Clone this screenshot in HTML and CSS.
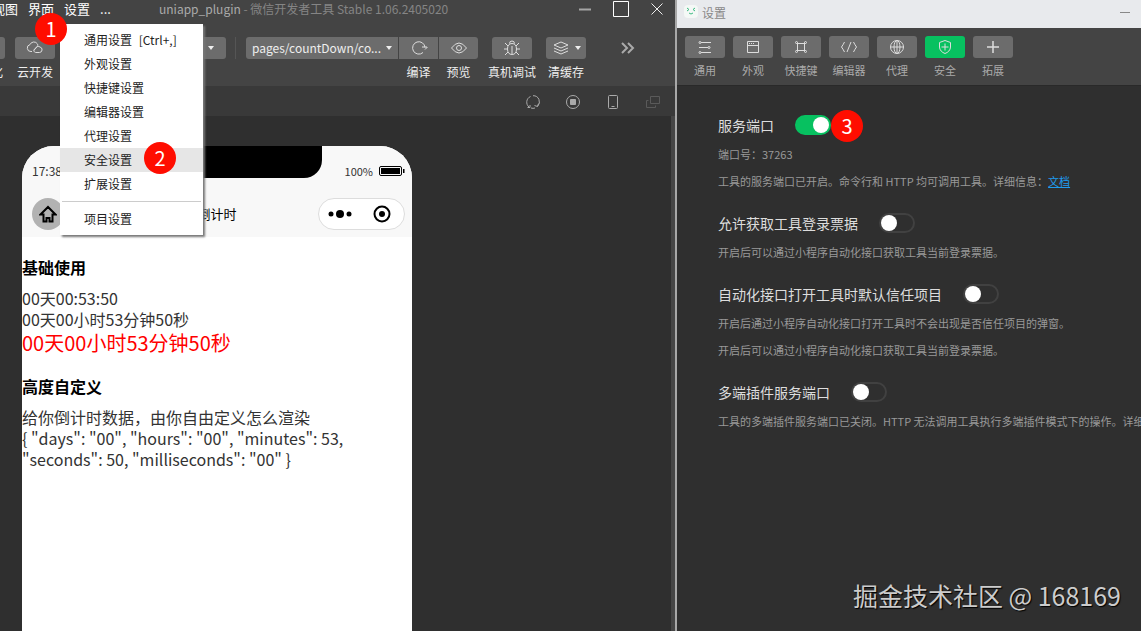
FILE: index.html
```html
<!DOCTYPE html>
<html lang="zh-CN">

<head>
    <meta charset="UTF-8">
    <meta name="viewport" content="width=device-width, initial-scale=1.0">
    <title>设置</title>
    <link rel="stylesheet" href="styles.css">
</head>

<body>
    <main class="desktop">
        <!-- devtools window -->
        <section class="devtools">
            <header class="titlebar">
                <nav class="menubar">
                    <button type="button">视图</button>
                    <button type="button">界面</button>
                    <button type="button">设置</button>
                    <button type="button">...</button>
                </nav>
                <div class="window-title"><span>uniapp_plugin</span> - 微信开发者工具 Stable 1.06.2405020</div>
                <div class="window-buttons">
                    <button type="button" aria-label="最小化"><svg width="18" height="18" viewBox="0 0 18 18"><path d="M3 9.500h12" stroke="#a5a5a5" stroke-width="2"/></svg></button>
                    <button type="button" aria-label="最大化"><svg width="18" height="18" viewBox="0 0 18 18"><path d="M1.500 1.500h15v15h-15z" stroke="#fff"/></svg></button>
                    <button type="button" aria-label="关闭"><svg width="18" height="18" viewBox="0 0 18 18"><path d="M3.500 3.500l11 11M14.500 3.500l-11 11" stroke="#eee"/></svg></button>
                </div>
            </header>

            <div class="toolbar">
                <div class="tool first">
                    <button type="button" aria-label="可视化"></button>
                    <span>可视化</span>
                </div>
                <div class="tool">
                    <button type="button" aria-label="云开发"><svg width="18" height="16" viewBox="0 0 18 16"><path d="M6 11.500H5A3.500 3.500 0 0 1 4 4.600 4.200 4.200 0 0 1 11.500 4c1 2-1 4-3 5.200-1.500 1.300-.2 3.300 1.500 3.300h3.500a2.800 2.800 0 0 0 .5-5.500 3 3 0 0 0-4.500 1.200L8 10.500"/></svg></button>
                    <span>云开发</span>
                </div>
                <button type="button" class="more" aria-label="更多"><i class="caret"></i></button>
                <i class="divider"></i>
                <div class="group">
                    <button type="button" class="page-select">pages/countDown/co...<i class="caret"></i></button>
                    <div class="tool">
                        <button type="button" aria-label="编译"><svg width="18" height="16" viewBox="0 0 18 16"><path d="M13 12.500A6.200 6.200 0 1 1 15 7.500M12 7h5M15 9.500l2.500-2.500"/></svg></button>
                        <span>编译</span>
                    </div>
                    <div class="tool">
                        <button type="button" aria-label="预览"><svg width="18" height="16" viewBox="0 0 18 16"><path d="M1.500 8Q9-2 16.500 8 9 18 1.500 8z"/><circle cx="9" cy="8" r="2.500"/></svg></button>
                        <span>预览</span>
                    </div>
                </div>
                <div class="tool debug">
                    <button type="button" aria-label="真机调试"><svg width="18" height="16" viewBox="0 0 18 16"><path d="M9 3.500c3 0 4.500 2 4.500 5.500S12 14.500 9 14.500 4.500 12.500 4.500 9 6 3.500 9 3.500zM9 6v8M6.500 3.500a2.500 2.500 0 0 1 5 0M1 9h3.500M13.500 9H17M2 3l3 3M16 3l-3 3M2 15l3-3M16 15l-3-3"/></svg></button>
                    <span>真机调试</span>
                </div>
                <div class="tool">
                    <button type="button" aria-label="清缓存"><svg width="18" height="16" viewBox="0 0 18 16"><path d="M9 2l7 3-7 3-7-3zM2 8l7 3 7-3M2 11l7 3 7-3"/></svg><i class="caret"></i></button>
                    <span>清缓存</span>
                </div>
                <button type="button" class="expand" aria-label="展开"><svg width="16" height="14" viewBox="0 0 16 14"><path d="M2 2l5 5-5 5M8 2l5 5-5 5" stroke="#aaa" stroke-width="2"/></svg></button>
            </div>

            <div class="subbar">
                <button type="button" aria-label="刷新"><svg width="16" height="16" viewBox="0 0 16 16"><path d="M4 13A6.200 6.200 0 0 1 5.500 2.500M8 1.700a6.200 6.200 0 0 1 4.500 10.700M6 14a6 6 0 0 0 4 0M2.500 13.500H5V11M13.500 9.500l-1 3-3-1"/></svg></button>
                <button type="button" aria-label="停止"><svg width="16" height="16" viewBox="0 0 16 16"><circle cx="8" cy="8" r="6.500"/><path d="M5.500 5.500h5v5h-5z" fill="#aaa"/></svg></button>
                <button type="button" aria-label="机型"><svg width="16" height="16" viewBox="0 0 16 16"><rect x="3.500" y="1.500" width="9" height="13" rx="1"/><path d="M6.500 12.500h3"/></svg></button>
                <button type="button" class="off" aria-label="分离窗口"><svg width="16" height="16" viewBox="0 0 16 16"><path d="M5.500 2.500h9v7h-9zM3.500 6.500h-2v7h9v-2"/></svg></button>
            </div>

            <div class="simulator">
                <div class="phone">
                    <div class="status">
                        <span class="time">17:38</span>
                        <i class="notch"></i>
                        <span class="power">100%</span>
                        <svg width="26" height="10" viewBox="0 0 26 10"><rect x=".5" y=".5" width="22" height="9" rx="1.500" fill="none" stroke="#000"/><path d="M2 2h19v6H2zM24 3h1.500v4H24z"/></svg>
                    </div>
                    <div class="navbar">
                        <button type="button" class="home" aria-label="首页"><svg width="18" height="18" viewBox="0 0 18 18"><path d="M1.500 9.500L9 2l7.500 7.500h-3v7h-3V13h-3v3.500h-3v-7z"/></svg></button>
                        <h1>倒计时</h1>
                        <div class="capsule">
                            <svg width="24" height="10" viewBox="0 0 24 10"><circle cx="3" cy="5" r="2.500"/><circle cx="12" cy="5" r="4"/><circle cx="21" cy="5" r="2.500"/></svg>
                            <svg width="18" height="18" viewBox="0 0 18 18"><circle cx="9" cy="9" r="7.500" fill="none" stroke="#000" stroke-width="2"/><circle cx="9" cy="9" r="3"/></svg>
                        </div>
                    </div>
                    <div class="page">
                        <h2>基础使用</h2>
                        <p>00天00:53:50</p>
                        <p>00天00小时53分钟50秒</p>
                        <p class="big">00天00小时53分钟50秒</p>
                        <h2>高度自定义</h2>
                        <p>给你倒计时数据，由你自由定义怎么渲染</p>
                        <p>{ "days": "00", "hours": "00", "minutes": 53,<br>"seconds": 50, "milliseconds": "00" }</p>
                    </div>
                </div>
            </div>

            <div class="menu">
                <button type="button">通用设置 <span>[Ctrl+,]</span></button>
                <button type="button">外观设置</button>
                <button type="button">快捷键设置</button>
                <button type="button">编辑器设置</button>
                <button type="button">代理设置</button>
                <button type="button" class="active">安全设置</button>
                <button type="button">扩展设置</button>
                <hr>
                <button type="button">项目设置</button>
                <b class="badge badge-1">1</b>
                <b class="badge badge-2">2</b>
            </div>
        </section>

        <!-- settings window -->
        <section class="settings">
            <header class="settings-title">
                <svg width="14" height="14" viewBox="0 0 14 14"><rect width="14" height="13" rx="4" fill="#f4f8f6"/><path d="M3 3l2 1.500L3 6M11 3L9 4.500 11 6M5 8q2 2 4 0" fill="none" stroke="#3dbb83"/></svg>
                <span>设置</span>
                <button type="button" aria-label="最小化"></button>
            </header>
            <nav class="tabs">
                <div class="tool">
                    <button type="button" aria-label="通用"><svg width="16" height="16" viewBox="0 0 16 16"><path d="M4 3.500h10M2 8.500h9M4 13.500h10"/><circle cx="3" cy="3.500" r="1"/><circle cx="12" cy="8.500" r="1"/><circle cx="3" cy="13.500" r="1"/></svg></button>
                    <span>通用</span>
                </div>
                <div class="tool">
                    <button type="button" aria-label="外观"><svg width="16" height="16" viewBox="0 0 16 16"><path d="M2.500 2.500h11v11h-11zM2.500 6.500h11M4 4.500h1M6 4.500h1M8 4.500h1"/></svg></button>
                    <span>外观</span>
                </div>
                <div class="tool">
                    <button type="button" aria-label="快捷键"><svg width="16" height="16" viewBox="0 0 16 16"><path d="M4.500 3.500v9M11.500 3.500v9M3.500 4.500h9M3.500 11.500h9"/><circle cx="3.500" cy="3.500" r="1"/><circle cx="12.500" cy="3.500" r="1"/><circle cx="3.500" cy="12.500" r="1"/><circle cx="12.500" cy="12.500" r="1"/></svg></button>
                    <span>快捷键</span>
                </div>
                <div class="tool">
                    <button type="button" aria-label="编辑器"><svg width="16" height="16" viewBox="0 0 16 16"><path d="M3.500 3Q2 6 .5 8q1.500 2 3 5M12.500 3Q14 6 15.500 8q-1.500 2-3 5M10 3L6 13"/></svg></button>
                    <span>编辑器</span>
                </div>
                <div class="tool">
                    <button type="button" aria-label="代理"><svg width="16" height="16" viewBox="0 0 16 16"><circle cx="8" cy="8" r="6.500"/><ellipse cx="8" cy="8" rx="3" ry="6.500"/><path d="M8 1.500v13M1.500 8h13"/></svg></button>
                    <span>代理</span>
                </div>
                <div class="tool selected">
                    <button type="button" aria-label="安全"><svg width="16" height="16" viewBox="0 0 16 16"><path d="M8 1.500l5.500 2V8c0 3-2.500 5.500-5.500 6.500C5 13.500 2.500 11 2.500 8V3.500zM8 4.500v7M4.500 8h7"/></svg></button>
                    <span>安全</span>
                </div>
                <div class="tool">
                    <button type="button" aria-label="拓展"><svg width="16" height="16" viewBox="0 0 16 16"><path d="M8 2v12M2 8h12" stroke-width="1.500"/></svg></button>
                    <span>拓展</span>
                </div>
            </nav>

            <div class="options">
                <div class="option">
                    <div class="option-head">
                        <label for="port">服务端口</label>
                        <input type="checkbox" id="port" checked>
                        <b class="badge badge-3">3</b>
                    </div>
                    <p>端口号：37263</p>
                    <p>工具的服务端口已开启。命令行和 HTTP 均可调用工具。详细信息：<a href="#">文档</a></p>
                </div>
                <div class="option">
                    <div class="option-head">
                        <label for="ticket">允许获取工具登录票据</label>
                        <input type="checkbox" id="ticket">
                    </div>
                    <p>开启后可以通过小程序自动化接口获取工具当前登录票据。</p>
                </div>
                <div class="option">
                    <div class="option-head">
                        <label for="trust">自动化接口打开工具时默认信任项目</label>
                        <input type="checkbox" id="trust">
                    </div>
                    <p>开启后通过小程序自动化接口打开工具时不会出现是否信任项目的弹窗。</p>
                    <p>开启后可以通过小程序自动化接口获取工具当前登录票据。</p>
                </div>
                <div class="option">
                    <div class="option-head">
                        <label for="plugin">多端插件服务端口</label>
                        <input type="checkbox" id="plugin">
                    </div>
                    <p>工具的多端插件服务端口已关闭。HTTP 无法调用工具执行多端插件模式下的操作。详细</p>
                </div>
            </div>
            <div class="watermark">掘金技术社区 @ 168169</div>
        </section>
    </main>
</body>

</html>
```
FILE: styles.css
```css
* {
    margin: 0;
    padding: 0;
    box-sizing: border-box;
}

body {
    height: 100vh;
    overflow: hidden;
    background-color: #2f2f2f;
    font-family: "Noto Sans CJK SC", sans-serif;
    font-size: 12px;
    line-height: 18px;
}

button {
    border: none;
    background: none;
    color: inherit;
    font: inherit;
}

svg {
    display: block;
    flex: none;
}

.desktop {
    height: 100%;
    display: grid;
    grid-template-columns: minmax(0, 677fr) minmax(0, 464fr);
}

/* devtools window */
.devtools {
    position: relative;
    display: flex;
    flex-direction: column;
    overflow: hidden;
    border-right: 2px solid #a8a8a8;
    background-color: #444;
    color: #eee;
}

.titlebar {
    display: flex;
    height: 18px;
}

.menubar {
    display: flex;
    flex: 0 0 167px;
    gap: 10px;
    margin-left: -8px;
    font-size: 13px;
    color: #fff;
}

.window-title {
    flex: 1;
    white-space: nowrap;
    color: #858585;
}

.window-title span {
    color: #aaa;
}

.window-buttons {
    display: flex;
    gap: 18px;
    padding-right: 9px;
}

.window-buttons svg,
.tool svg,
.expand svg,
.subbar svg {
    fill: none;
}

.toolbar {
    display: flex;
    height: 68px;
    padding-top: 19px;
}

.tool {
    width: 40px;
    display: flex;
    flex-direction: column;
    align-items: center;
    gap: 4px;
    flex: none;
    white-space: nowrap;
}

.tool button,
.page-select,
.more {
    width: 40px;
    height: 22px;
    display: flex;
    justify-content: center;
    align-items: center;
    gap: 5px;
    border-radius: 3px;
    background-color: #6c6c6c;
}

.tool svg {
    stroke: #ddd;
}

.tool.first {
    margin-left: -35px;
    margin-right: 10px;
}

.caret {
    border: 3px solid transparent;
    border-top: 4px solid #eee;
    border-bottom: none;
}

.more {
    width: 30px;
    margin-left: 141px;
}

.divider {
    width: 1px;
    height: 22px;
    margin: 0 10px 0 9px;
    background-color: #555;
}

.group {
    display: flex;
    gap: 1px;
}

.group .page-select {
    width: 152px;
    border-radius: 3px 0 0 3px;
}

.group .tool {
    width: 39px;
}

.group .tool button {
    width: 39px;
    border-radius: 0;
}

.group .tool:last-child button {
    border-radius: 0 3px 3px 0;
}

.tool.debug {
    margin: 0 14px;
}

.expand {
    height: 22px;
    margin-left: 34px;
}

.subbar {
    display: flex;
    justify-content: flex-end;
    align-items: center;
    gap: 24px;
    height: 30px;
    padding: 2px 14px 0 0;
    background-color: #393939;
}

.subbar svg {
    stroke: #aaa;
}

.subbar .off svg {
    stroke: #5a5a5a;
}

.simulator {
    flex: 1;
    display: flex;
    padding: 30px 0 0 22px;
    border-right: 4px solid #464646;
    background-color: #2f2f2f;
}

.phone {
    width: 390px;
    overflow: hidden;
    border-radius: 32px 32px 0 0;
    background-color: #fff;
    color: #000;
}

.status {
    position: relative;
    height: 46px;
    display: flex;
    align-items: center;
    gap: 6px;
    padding: 4px 7px 0 10px;
    background-color: #f8f8f8;
    color: #333;
}

.notch {
    position: absolute;
    left: 50%;
    top: 0;
    width: 210px;
    height: 32px;
    transform: translateX(-50%);
    border-radius: 0 0 18px 18px;
    background-color: #000;
}

.power {
    margin-left: auto;
    font-size: 11px;
}

.navbar {
    height: 45px;
    display: grid;
    grid-template-columns: 1fr auto 1fr;
    align-items: center;
    padding: 0 7px 2px;
    background-color: #f8f8f8;
}

.home {
    width: 32px;
    height: 32px;
    display: flex;
    justify-content: center;
    align-items: center;
    margin-left: 3px;
    border-radius: 50%;
    background-color: #b2b2b2;
}

.home svg {
    fill: none;
    stroke: #000;
    stroke-width: 2;
}

.navbar h1 {
    font-size: 13px;
    font-weight: 400;
}

.capsule {
    width: 87px;
    height: 32px;
    display: flex;
    justify-self: end;
    justify-content: space-between;
    align-items: center;
    padding: 0 13px 0 9px;
    border: 1px solid #ddd;
    border-radius: 16px;
    background-color: #fff;
}

.page {
    font-size: 16px;
    line-height: 21px;
    color: #333;
}

.page h2 {
    padding: 20px 0 10px;
    font-size: 16px;
    color: #000;
}

.page .big {
    font-size: 20px;
    line-height: 26px;
    color: #f00;
}

/* dropdown of the menu bar */
.menu {
    position: absolute;
    left: 60px;
    top: 24px;
    width: 143px;
    padding: 4px 0;
    background-color: #fff;
    box-shadow: 2px 2px 2px #777;
    color: #222;
}

.menu button {
    display: block;
    width: 100%;
    height: 24px;
    padding-left: 24px;
    text-align: left;
}

.menu button.active {
    background-color: #e6e6e6;
}

.menu span {
    margin-left: 4px;
}

.menu hr {
    margin: 5px 2px;
    border: none;
    border-top: 1px solid #ccc;
}

.badge {
    position: absolute;
    width: 32px;
    height: 32px;
    border-radius: 50%;
    background-color: #ff0d00;
    color: #fff;
    font-size: 20px;
    font-weight: 400;
    line-height: 32px;
    text-align: center;
}

.badge-1 {
    left: -25px;
    top: -11px;
}

.badge-2 {
    left: 84px;
    top: 118px;
}

/* settings window */
.settings {
    position: relative;
    overflow: hidden;
    background-color: #2f2f2f;
}

.settings-title {
    height: 28px;
    display: flex;
    align-items: center;
    gap: 4px;
    padding: 0 11px 4px 7px;
    background-color: #e8eaed;
    color: #888;
}

.settings-title span {
    padding-top: 2px;
}

.settings-title button {
    width: 10px;
    height: 1px;
    margin-left: auto;
    background-color: #888;
}

.tabs {
    display: flex;
    gap: 8px;
    height: 58px;
    padding: 8px 8px 0;
    border-bottom: 1px solid #292929;
    background-color: #444;
    color: #aaa;
    font-size: 11px;
}

.tabs .tool {
    gap: 3px;
}

.tabs .selected button {
    background-color: #07c160;
}

.options {
    padding: 28px 0 0 41px;
    white-space: nowrap;
}

.option {
    margin-bottom: 17px;
}

.option-head {
    position: relative;
    height: 21px;
    display: flex;
    align-items: center;
    gap: 21px;
    margin-bottom: 6px;
    color: #ddd;
    font-size: 14px;
}

.option p {
    color: #999;
    font-size: 11px;
    line-height: 27px;
}

.option a {
    color: #1f9cf0;
}

.option input {
    appearance: none;
    width: 36px;
    height: 20px;
    display: flex;
    align-items: center;
    border: 2px solid #414141;
    border-radius: 10px;
}

.option input::before {
    content: "";
    width: 16px;
    height: 16px;
    border-radius: 50%;
    background-color: #fff;
}

.option input:checked {
    justify-content: flex-end;
    border-color: #07c160;
    background-color: #07c160;
}

.badge-3 {
    left: 113px;
    top: -4px;
}

.watermark {
    position: absolute;
    right: 20px;
    bottom: 18px;
    color: #ccc;
    font-size: 25px;
    line-height: 36px;
    text-shadow: 1px 1px 1px #000;
}
```
